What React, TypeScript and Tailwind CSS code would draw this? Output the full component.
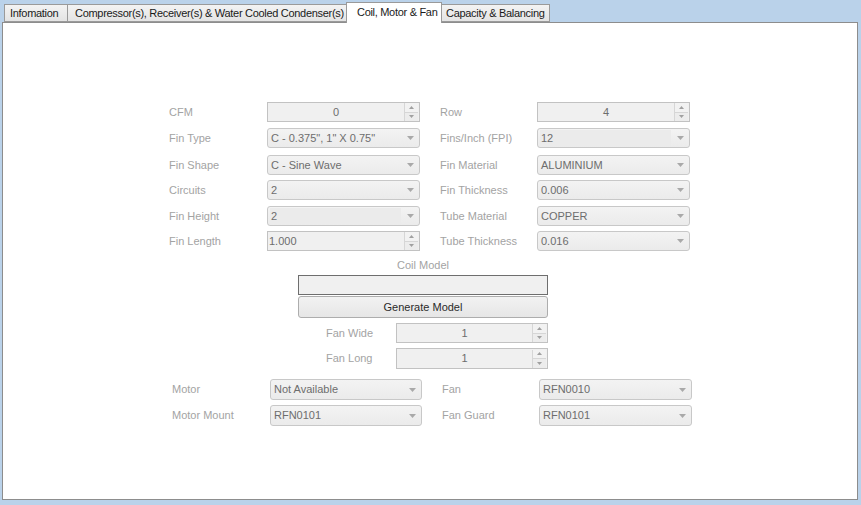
import React from "react";

const Arrow = () => (
  <svg width="7" height="4" viewBox="0 0 7 4" className="shrink-0">
    <path d="M0 0 H7 L3.5 4 Z" fill="#a9a9a9" />
  </svg>
);

const SpinBtns = () => (
  <div className="flex flex-col w-[14px] h-[18px] mr-[1px] border-l border-[#d6d6d6]">
    <div className="flex-1 flex items-center justify-center border-b border-[#d6d6d6] bg-[#f2f2f2]">
      <svg width="5" height="3" viewBox="0 0 5 3">
        <path d="M0 3 H5 L2.5 0 Z" fill="#a0a0a0" />
      </svg>
    </div>
    <div className="flex-1 flex items-center justify-center bg-[#ececec]">
      <svg width="5" height="3" viewBox="0 0 5 3">
        <path d="M0 0 H5 L2.5 3 Z" fill="#a0a0a0" />
      </svg>
    </div>
  </div>
);

const Spin = ({ value, center = true, h = "h-[20px]" }: { value: string; center?: boolean; h?: string }) => (
  <div className={`${h} border border-[#c2c2c2] bg-[#f0f0f0] flex items-center`}>
    <div className={`flex-1 text-[#6d6d6d] ${center ? "text-center" : "pl-[1px]"}`}>{value}</div>
    <SpinBtns />
  </div>
);

const Combo = ({ value, editable = false, h = "h-[20px]" }: { value: string; editable?: boolean; h?: string }) => (
  <div className={`${h} rounded-[3px] border border-[#c8c8c8] bg-gradient-to-b from-[#f3f3f3] to-[#ebebeb] flex items-center`}>
    {editable ? (
      <div className="w-[131px] h-[16px] ml-[2px] bg-[#ebebeb] text-[#6d6d6d] leading-[16px] pl-[1px]">{value}</div>
    ) : (
      <div className="flex-1 pl-[3px] text-[#6d6d6d]">{value}</div>
    )}
    {editable && <div className="flex-1" />}
    <div className="w-[17px] flex justify-center">
      <Arrow />
    </div>
  </div>
);

const Label = ({ children }: { children: React.ReactNode }) => (
  <div className="text-[#a3a3a3] flex items-center whitespace-nowrap">{children}</div>
);

type Cell = { label: string; el: React.ReactNode };

const rows: { mt: string; l: Cell; r: Cell }[] = [
  { mt: "mt-0", l: { label: "CFM", el: <Spin value="0" /> }, r: { label: "Row", el: <Spin value="4" /> } },
  { mt: "mt-[6px]", l: { label: "Fin Type", el: <Combo value={'C - 0.375", 1" X 0.75"'} /> }, r: { label: "Fins/Inch (FPI)", el: <Combo value="12" editable /> } },
  { mt: "mt-[7px]", l: { label: "Fin Shape", el: <Combo value="C - Sine Wave" /> }, r: { label: "Fin Material", el: <Combo value="ALUMINIUM" /> } },
  { mt: "mt-[5px]", l: { label: "Circuits", el: <Combo value="2" /> }, r: { label: "Fin Thickness", el: <Combo value="0.006" /> } },
  { mt: "mt-[6px]", l: { label: "Fin Height", el: <Combo value="2" editable /> }, r: { label: "Tube Material", el: <Combo value="COPPER" /> } },
  { mt: "mt-[5px]", l: { label: "Fin Length", el: <Spin value="1.000" center={false} /> }, r: { label: "Tube Thickness", el: <Combo value="0.016" /> } },
];

const tabOff =
  "h-[18px] -ml-[1px] border border-[#9a9a9a] bg-gradient-to-b from-[#f3f3f3] to-[#e4e4e4] flex items-center whitespace-nowrap overflow-hidden text-[#1a1a1a] tracking-[-0.3px]";

export default function App() {
  return (
    <div className="w-[861px] h-[505px] bg-[#bad2ea] flex flex-col pb-[5px] font-['Liberation_Sans',Arial,sans-serif] text-[11px] leading-[13px] overflow-hidden">
      {/* Tabs */}
      <div className="h-[22px] flex items-end pl-[5px] shrink-0">
        <div className={`${tabOff} w-[64px] pl-[5px]`}>Infomation</div>
        <div className={`${tabOff} w-[280px] pl-[7px]`}>Compressor(s), Receiver(s) &amp; Water Cooled Condenser(s)</div>
        <div className="h-[21px] w-[96px] -ml-[1px] relative top-[1px] z-10 border border-b-0 border-[#9a9a9a] bg-white flex items-start pt-[3px] pl-[10px] whitespace-nowrap text-[#1a1a1a] tracking-[-0.3px]">Coil, Motor &amp; Fan</div>
        <div className={`${tabOff} w-[109px] pl-[4px]`}>Capacity &amp; Balancing</div>
      </div>
      {/* Panel */}
      <div className="flex-1 ml-[2px] mr-[3px] border border-[#8d8d8d] bg-white">
        <div className="ml-[166px] mt-[79px] flex flex-col">
          {rows.map((r, i) => (
            <div key={i} className={`${r.mt} grid grid-cols-[98px_153px_20px_97px_153px]`}>
              <Label>{r.l.label}</Label>
              {r.l.el}
              <div />
              <Label>{r.r.label}</Label>
              {r.r.el}
            </div>
          ))}
        </div>
        <div className="ml-[295px] w-[250px] flex flex-col">
          <div className="mt-[7px] h-[14px] text-center text-[#a3a3a3] leading-[14px]">Coil Model</div>
          <div className="mt-[3px] h-[20px] border border-[#6e6e6e] bg-[#f0f0f0]" />
          <div className="mt-[1px] h-[22px] rounded-[3px] border border-[#adadad] bg-gradient-to-b from-[#f2f2f2] to-[#e6e6e6] flex items-center justify-center text-[#2a2a2a]">Generate Model</div>
          <div className="mt-[5px] grid grid-cols-[28px_70px_152px]">
            <div />
            <Label>Fan Wide</Label>
            <Spin value="1" />
          </div>
          <div className="mt-[5px] grid grid-cols-[28px_70px_152px]">
            <div />
            <Label>Fan Long</Label>
            <Spin value="1" h="h-[21px]" />
          </div>
        </div>
        <div className="ml-[169px] mt-[10px] flex flex-col">
          <div className="grid grid-cols-[98px_152px_20px_97px_153px]">
            <Label>Motor</Label>
            <Combo value="Not Available" h="h-[21px]" />
            <div />
            <Label>Fan</Label>
            <Combo value="RFN0010" h="h-[21px]" />
          </div>
          <div className="mt-[5px] grid grid-cols-[98px_152px_20px_97px_153px]">
            <Label>Motor Mount</Label>
            <Combo value="RFN0101" h="h-[21px]" />
            <div />
            <Label>Fan Guard</Label>
            <Combo value="RFN0101" h="h-[21px]" />
          </div>
        </div>
      </div>
    </div>
  );
}
